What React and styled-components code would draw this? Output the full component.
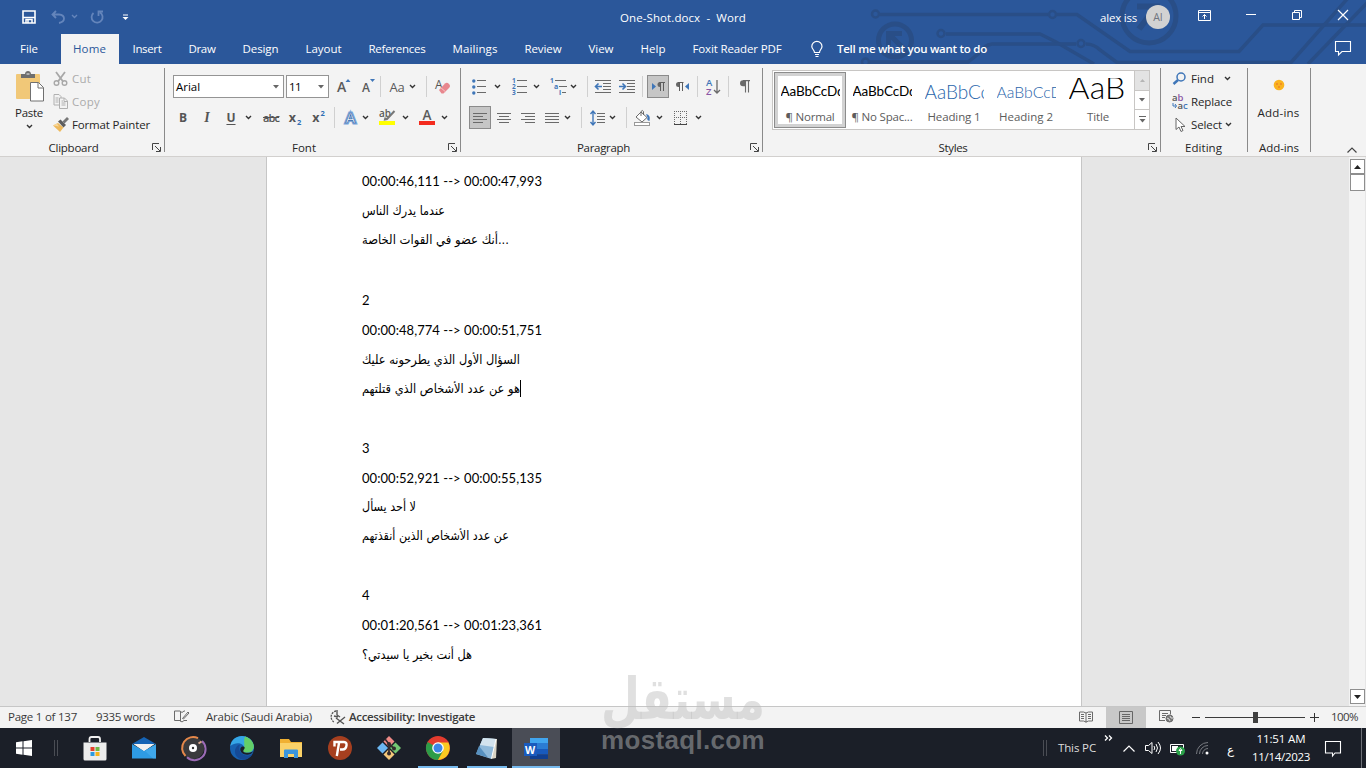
import React, { useLayoutEffect, useRef } from 'react';
import styled, { createGlobalStyle } from 'styled-components';

const Global = createGlobalStyle`
  * { box-sizing: border-box; }
  html, body { margin: 0; padding: 0; overflow: hidden; }
  body { font-family: "Open Sans", "Noto Sans", sans-serif; font-size: 11.5px; color: #262626; }
  svg { display: block; flex: none; overflow: visible; }
`;

/* ---------- text that fills a known measure ---------- */
const Measure = styled.span`
  display: inline-block;
  flex: none;
  width: ${p => p.$w}px;
  white-space: nowrap;
  line-height: 16px;
  font-size: ${p => p.$size || 11.5}px;
  font-weight: ${p => p.$weight || 400};
  font-family: ${p => p.$font || 'inherit'};
  color: ${p => p.$color || 'inherit'};
`;
const Run = styled.span`
  display: inline-block;
  white-space: pre;
  transform-origin: 0 50%;
  text-decoration: ${p => p.$deco || 'none'};
`;
function Text({ w, size, weight, font, color, deco, squeeze, children }) {
  const ref = useRef(null);
  useLayoutEffect(() => {
    const el = ref.current;
    el.style.letterSpacing = '';
    el.style.transform = '';
    const natural = el.getBoundingClientRect().width;
    if (squeeze) el.style.transform = `scaleX(${w / natural})`;
    else el.style.letterSpacing = `${(w - natural) / el.textContent.length}px`;
  }, [w, squeeze]);
  return (
    <Measure $w={w} $size={size} $weight={weight} $font={font} $color={color}>
      <Run ref={ref} $deco={deco}>{children}</Run>
    </Measure>
  );
}

function Ico({ w, h, children, ...rest }) {
  return <svg width={w} height={h} viewBox={`0 0 ${w} ${h}`} fill="none" {...rest}>{children}</svg>;
}
const Chevron = ({ color = '#333' }) => (
  <Ico w={7} h={5}><path d="M1 1l2.500 2.500L6 1" stroke={color} strokeWidth="1.400" /></Ico>
);

/* ---------- window frame ---------- */
const Window = styled.div`
  width: 1366px; height: 768px;
  display: flex; flex-direction: column;
  position: relative; overflow: hidden;
  background: #e6e6e6;
`;
const Header = styled.header`
  height: 64px; background: #2b579a; color: #fff; position: relative; overflow: hidden;
  display: flex; flex-direction: column;
`;
const Circuit = styled.svg` position: absolute; right: 0; top: 0; `;
const TitleBar = styled.div`
  height: 34px; display: flex; align-items: center; position: relative;
`;
const Piece = styled.div`
  display: flex; align-items: center; justify-content: center; flex: none;
  margin-left: ${p => p.$gap || 0}px;
  margin-top: ${p => p.$drop || 0}px;
  width: ${p => (p.$w ? `${p.$w}px` : 'auto')};
`;
const Avatar = styled.div`
  width: 24px; height: 24px; border-radius: 50%; background: #d2d2d2; color: #6f7580;
  display: flex; align-items: center; justify-content: center; font-size: 10.5px; flex: none;
  margin-left: 9px;
`;
const TabBar = styled.nav` height: 30px; display: flex; align-items: stretch; position: relative; padding-left: 20px; `;
const Tab = styled.div`
  display: flex; align-items: center; padding: 0 ${p => p.$right ?? 13.5}px 0 ${p => p.$left ?? 13.5}px;
  background: ${p => (p.$active ? '#f3f3f3' : 'transparent')};
  color: ${p => (p.$active ? '#2b579a' : '#fff')};
`;

/* ---------- ribbon ---------- */
const Ribbon = styled.section`
  height: 93px; background: #f3f3f3; border-bottom: 1px solid #d2d0ce;
  display: flex; align-items: stretch; flex: none;
`;
const Group = styled.div`
  width: ${p => p.$w}px; display: flex; flex-direction: column; flex: none;
  position: relative;
  &::after {
    content: ''; position: absolute; right: 0; top: 4px; bottom: 4px; width: 1px; background: #8a8a8a;
  }
`;
const GroupBody = styled.div` height: 75px; display: flex; flex-direction: ${p => (p.$row ? 'row' : 'column')}; padding: ${p => p.$pad || 0}; `;
const GroupLabel = styled.div`
  height: 17px; display: flex; align-items: center; justify-content: center; position: relative;
  padding-right: ${p => p.$shift || 0}px;
`;
const Launcher = styled.span` position: absolute; right: 4px; top: 4px; `;
const ToolRow = styled.div` height: 23px; display: flex; align-items: center; margin-bottom: ${p => p.$mb || 0}px; `;
const Divider = styled.i` width: 1px; height: 21px; background: #d0d0d0; flex: none; margin-left: ${p => p.$gap}px; `;
const Combo = styled.div`
  width: ${p => p.$w}px; height: 23px; border: 1px solid #949494; background: #fff; flex: none;
  display: flex; align-items: center; justify-content: space-between; padding: 0 4px 0 2px; color: #000;
  margin-right: 2px;
`;
const Pressed = styled.div`
  width: 22px; height: 23px; border: 1px solid #8b8b8b; background: #c6c6c6; flex: none;
  display: flex; align-items: center; justify-content: center; margin-left: ${p => p.$gap || 0}px;
`;
const Glyph = styled.span`
  font-size: ${p => p.$size || 13}px; font-weight: ${p => p.$weight || 400}; color: #555;
  font-style: ${p => (p.$italic ? 'italic' : 'normal')};
  font-family: ${p => p.$font || 'inherit'};
  text-decoration: ${p => p.$deco || 'none'}; text-underline-offset: 2px;
  line-height: 16px; white-space: nowrap;
  sup, sub { font-size: 7.5px; line-height: 0; color: #2f6eb5; margin-left: 1px; }
`;
const PasteButton = styled.div`
  width: 38px; display: flex; flex-direction: column; align-items: center; gap: 3px; margin-left: 10px; padding-top: 7px;
`;
const CommandList = styled.div` display: flex; flex-direction: column; padding-top: 3px; margin-left: ${p => p.$gap}px; `;
const Command = styled.div`
  height: 23px; display: flex; align-items: center; color: ${p => (p.$off ? '#ababab' : '#262626')};
`;
const CommandIcon = styled.span` width: ${p => p.$w}px; display: flex; align-items: center; flex: none; `;

/* ---------- style gallery ---------- */
const Gallery = styled.div`
  width: 378px; height: 60px; border: 1px solid #c8c6c4; background: #fff; display: flex; margin-left: 9px;
`;
const StyleCell = styled.div`
  width: 72px; height: 56px; margin: 1px 0 0 ${p => (p.$on ? 1 : 0)}px; flex: none;
  display: flex; flex-direction: column; align-items: center; justify-content: space-between;
  padding: 6px 0 3px; color: #5c5c5c;
  box-shadow: ${p => (p.$on ? 'inset 0 0 0 1px #8c8c8c, inset 0 0 0 4px #d2d2d2' : 'none')};
`;
const Sample = styled.div`
  width: 59px; height: 27px; overflow: hidden; display: flex;
  align-items: ${p => (p.$tall ? 'flex-start' : 'center')};
  span { line-height: ${p => (p.$tall ? '18px' : '27px')}; }
`;
const GalleryScroll = styled.div` width: 15px; margin-left: auto; display: flex; flex-direction: column; border-left: 1px solid #c8c6c4; `;
const ScrollStep = styled.div`
  flex: 1; display: flex; align-items: center; justify-content: center;
  background: ${p => (p.$off ? '#e3e3e3' : '#fff')};
  & + & { border-top: 1px solid #c8c6c4; }
`;
const AddIn = styled.div` width: 100%; display: flex; flex-direction: column; align-items: center; padding: 15px 2px 0 0; gap: 14px; `;
const Collapse = styled.div` margin-left: auto; display: flex; align-items: flex-end; padding: 0 9px 3px 0; `;

/* ---------- document ---------- */
const Workspace = styled.main` height: 549px; display: flex; flex: none; background: #e6e6e6; `;
const Sheet = styled.article`
  width: 816px; margin-left: 266px; background: #fff; border: solid #c6c6c6; border-width: 0 1px;
  padding: 9px 0 0 95px; color: #000; display: flex; flex-direction: column;
`;
const Line = styled.p`
  margin: 0; height: ${p => p.$h}px; display: flex; align-items: center; flex: none;
`;
const Caret = styled.i` width: 1px; height: 17px; background: #000; `;
const ScrollBar = styled.aside`
  width: 16px; margin-left: auto; margin-right: 1px; background: #f3f3f3; padding: 2px 0 2px 1px; display: flex; flex-direction: column;
`;
const ScrollBox = styled.div`
  width: 15px; height: ${p => p.$h}px; border: 1px solid #8e8e8e; background: #fff;
  display: flex; align-items: center; justify-content: center; margin-top: ${p => p.$mt || 0};
`;

/* ---------- status bar ---------- */
const Status = styled.footer`
  height: 22px; border-top: 1px solid #c6c6c6; background: #f3f3f3; display: flex; align-items: center; flex: none; color: #3b3b3b;
`;
const ViewOn = styled.div` width: 40px; height: 21px; background: #c8c8c8; display: flex; align-items: center; justify-content: center; margin-left: 13px; padding-bottom: 1px; `;
const Slider = styled.div`
  width: 100px; height: 11px; margin: 0 5px 0 5px; display: flex; align-items: center; justify-content: center;
  background: linear-gradient(#3b3b3b, #3b3b3b) 0 5px / 100% 1px no-repeat;
  &::after { content: ''; width: 5px; height: 11px; background: #3f3f3f; }
`;

/* ---------- taskbar ---------- */
const TaskBar = styled.footer` height: 40px; background: #1b1f28; display: flex; align-items: stretch; flex: none; color: #fff; `;
const AppButton = styled.div`
  width: ${p => p.$w || 49}px; display: flex; align-items: center; justify-content: center; flex: none;
  background: ${p => (p.$on ? '#4a4d56' : 'transparent')};
`;
const Running = styled(AppButton)`
  border-bottom: 2px solid #76b9ed; padding-top: 2px; margin-left: ${p => p.$gap || 0}px;
`;
const Grip = styled.i` width: 4px; height: 16px; border: solid #4a4d54; border-width: 0 1px; align-self: center; margin-left: ${p => p.$gap}px; `;
const Clock = styled.div` display: flex; flex-direction: column; align-items: center; justify-content: center; gap: 2px; margin-left: 18px; width: 58px; padding-bottom: 1px; `;
const ShowDesktop = styled.i` width: 1px; background: #6d7077; margin-left: 20px; `;

const Brand = styled.div`
  position: absolute; left: 601px; top: 672px; width: 165px; height: 82px;
  color: rgba(189, 189, 189, .47);
  display: flex; flex-direction: column;
`;
const BrandArabic = styled.div`
  height: 54px;
  span { line-height: 55px; }
`;
const BrandLatin = styled.div` height: 28px; span { line-height: 28px; } `;

/* ---------- icons ---------- */
const G = '#6a6a6a';
const B = '#3f76b8';

const LauncherIcon = () => (
  <Ico w={9} h={9}><path d="M.5 7V.5H7M3 3l5 5M8.500 4v4.500H4" stroke="#444" /></Ico>
);
const AlignIcon = ({ rows }) => (
  <Ico w={15} h={10}>{rows.map(([x1, x2, y]) => <path key={y} d={`M${x1} ${y}.5H${x2}`} stroke={G} />)}</Ico>
);

const PasteIcon = () => (
  <Ico w={30} h={31}>
    <rect x="2" y="3" width="24" height="25" rx="1" fill="#f1c878" />
    <path d="M7 3h4c0-4 6-4 6 0h4v4H7z" fill="#6e6e6e" /><path d="M12.500 3h3" stroke="#f1f1f1" />
    <path d="M16.500 11.500h8l5 5V30h-13z" fill="#fff" stroke="#707070" /><path d="M24 11.500v5.500h5.500" stroke="#707070" />
  </Ico>
);
const CutIcon = () => (
  <Ico w={16} h={16} stroke="#a8a8a8"><path d="M3 1l7 9.500M12 1L5 10.500" strokeWidth="1.800" /><circle cx="3.500" cy="12" r="2.300" strokeWidth="1.400" /><circle cx="11.500" cy="12" r="2.300" strokeWidth="1.400" /></Ico>
);
const CopyIcon = () => (
  <Ico w={16} h={15} stroke="#b0b0b0"><path d="M1 .5h5l2 2V11H1zM2.500 4h3M2.500 6h3M2.500 8h3" /><path d="M6.500 4h5l3 3v7.500h-8z" fill="#f3f3f3" /><path d="M11 4v3.500h3.500M8.500 9h4M8.500 11h4M8.500 7h1.500" /></Ico>
);
const BrushIcon = () => (
  <Ico w={16} h={15}><path d="M0 8.500l5-2.500 5.500 4.500L7 15z" fill="#eeb95c" /><path d="M0 8.500l4-2 2 3z" fill="#f7d79c" /><path d="M5 4.500l2.500-2L13 8l-2.500 2.500z" fill="#5e5e5e" /><path d="M10.500 5.500L15 1" stroke="#777" strokeWidth="2.800" /></Ico>
);
const EraserIcon = () => (
  <Ico w={16} h={17}><text x="0" y="11" fontSize="12" fill="#555">A</text><path d="M4 12l6-6.500q2-1.500 4 .500t0 4L8.500 15.500H6.500z" fill="#e8878e" /><path d="M6 9.800l4.500 4" stroke="#f6c4c6" /></Ico>
);
const BulletsIcon = () => (
  <Ico w={14} h={14}>{[1, 7, 13].map(y => <g key={y}><circle cx="1.800" cy={y} r="1.700" fill={B} /><path d={`M5 ${y - .5}h9`} stroke={G} /></g>)}</Ico>
);
const NumbersIcon = () => (
  <Ico w={15} h={17}>{[1, 2, 3].map(n => <g key={n}><text x="0" y={n * 6 - 1} fontSize="6.500" fontWeight="700" fill={B}>{n}</text><path d={`M5 ${n * 6 - 3.5}h10`} stroke={G} /></g>)}</Ico>
);
const MultiIcon = () => (
  <Ico w={17} h={17}><text x="0" y="5" fontSize="6.500" fontWeight="700" fill={B}>1</text><text x="4" y="11" fontSize="7" fontWeight="700" fill={B}>a</text><text x="9" y="16.500" fontSize="7" fontWeight="700" fill={B}>i</text><path d="M5 2.500h11M9 8.500h8M12 14.500h4" stroke={G} /></Ico>
);
const IndentIcon = ({ out }) => (
  <Ico w={16} h={13}><path d="M0 .5h16M8 3.500h8M8 6.500h8M8 9.500h8M0 12.500h16" stroke={G} /><path d={out ? 'M7 6.500H1M3.500 3.500l-3 3 3 3' : 'M0 6.500h6M3.500 3.500l3 3-3 3'} stroke={B} strokeWidth="1.600" /></Ico>
);
const LtrIcon = () => <Ico w={13} h={9}><path d="M0 1l4 3.500L0 8z" fill={B} /><path d="M8.500 0v5h-.5a2.500 2.500 0 010-5z" fill="#666" /><path d="M13 .5H7.500M8.500 0v9M11.500 0v9" stroke="#5d5d5d" /></Ico>;
const RtlIcon = () => <Ico w={13} h={9}><path d="M13 1L9 4.500 13 8z" fill={B} /><path d="M3 0v5h-.500a2.500 2.500 0 010-5z" fill="#666" /><path d="M7.500 .5H2M3.500 0v9M6.500 0v9" stroke="#5d5d5d" /></Ico>;
const SortIcon = () => (
  <Ico w={15} h={17}><text x="0" y="7.500" fontSize="9.500" fontWeight="600" fill={B}>A</text><text x="0" y="17" fontSize="9.500" fontWeight="600" fill="#8b57a5">Z</text><path d="M11 2v13M8 12l3 3 3-3" stroke={G} strokeWidth="1.300" /></Ico>
);
const PilcrowIcon = () => (
  <Ico w={11} h={13}><path d="M11 .6H4M6.500 .5v12M9.500 .5v12" stroke={G} strokeWidth="1.100" /><path d="M6.500 .3H4a3 3 0 000 6h2.500z" fill={G} /></Ico>
);
const SpacingIcon = () => (
  <Ico w={15} h={16}><path d="M3 1v14M.500 4L3 1l2.500 3M.500 12L3 15l2.500-3" stroke={B} strokeWidth="1.400" /><path d="M7 3.500h8M7 6.500h8M7 9.500h8M7 12.500h8" stroke={G} /></Ico>
);
const BucketIcon = () => (
  <Ico w={17} h={16}><path d="M2 7l5-5 6 5.500-5 4.500z" fill="#fff" stroke={G} /><path d="M7 6V1.500q1.500-2 2.500 0V5" stroke={G} /><path d="M12 4q5 1 3.500 7-3-.500-2-3.500z" fill={B} /><rect x=".5" y="12.500" width="15" height="3" fill="#fff" stroke="#999" /></Ico>
);
const BordersIcon = () => (
  <Ico w={14} h={14}><path d="M.5 0v13M6.500 0v13M12.500 0v13M0 .5h13M0 6.500h13" stroke={G} strokeDasharray="1 1" /><path d="M0 13.500h13" stroke="#444" /></Ico>
);

const BookIcon = () => (
  <Ico w={14} h={12} stroke={G}><path d="M.5 1h4L7 2l2.500-1h4v9h-4L7 11l-2.500-1h-4zM7 2v9.500M2 3.500h3M2 5.500h3M2 7.500h3M9 3.500h3M9 5.500h3M9 7.500h3" /></Ico>
);
const PageIcon = () => <Ico w={14} h={13} stroke="#666"><path d="M.5 .5h13v12H.5zM3 3.500h8M3 5.500h8M3 7.500h8M3 9.500h8" /></Ico>;
const WebIcon = () => <Ico w={15} h={13} stroke={G}><path d="M.5 10.500V.5h11v4M3 3.500h6M3 5.500h4M3 7.500h3M0 10.500h6" /><circle cx="10.500" cy="8.500" r="3.500" fill="#777" /><path d="M8 8l2 1 1 2M11 6l1 2h2" stroke="#ddd" /></Ico>;

const documentLines = [
  { t: '00:00:46,111 --> 00:00:47,993', h: 30, w: 180 },
  { a: 'عندما يدرك الناس', w: 83 },
  { a: 'أنك عضو في القوات الخاصة...', w: 147 },
  { gap: 31 },
  { t: '2', h: 30, w: 7 },
  { t: '00:00:48,774 --> 00:00:51,751', h: 30, w: 180 },
  { a: 'السؤال الأول الذي يطرحونه عليك', w: 158 },
  { a: 'هو عن عدد الأشخاص الذي قتلتهم', w: 158, caret: true },
  { gap: 30 },
  { t: '3', h: 30, w: 7 },
  { t: '00:00:52,921 --> 00:00:55,135', h: 29, w: 180 },
  { a: 'لا أحد يسأل', w: 54 },
  { a: 'عن عدد الأشخاص الذين أنقذتهم', w: 147 },
  { gap: 30 },
  { t: '4', h: 30, w: 7 },
  { t: '00:01:20,561 --> 00:01:23,361', h: 30, w: 180 },
  { a: 'هل أنت بخير يا سيدتي؟', w: 110 },
];
const tabs = [['Insert', 29], ['Draw', 27], ['Design', 36], ['Layout', 36], ['References', 57], ['Mailings', 45], ['Review', 37], ['View', 25], ['Help', 25], ['Foxit Reader PDF', 89]];
const calibri = 'Lato, "Open Sans", sans-serif';

function AppHeader() {
  return (
    <Header>
      <Circuit width="510" height="64" viewBox="856 0 510 64" fill="none" stroke="#294e87" strokeWidth="3.500">
        <circle cx="875.500" cy="14" r="3.500" strokeWidth="2.500" /><path d="M880 14.500h168M1057 14.500h20L1130 51.500h109l24-26.500h103" />
        <circle cx="1052.500" cy="14.500" r="3.500" strokeWidth="2.500" /><circle cx="941" cy="33.500" r="3.500" strokeWidth="2.500" />
        <path d="M946 34h94l16 8 38 22" /><circle cx="1081" cy="43.500" r="3.500" strokeWidth="2.500" />
        <path d="M1076 44h-84q-8 1-14 10l-10 8h-98M1086 44q8 0 14 6l17 12.500h174L1348-2M1308 64l60-62" />
        <circle cx="865.500" cy="62" r="3.500" strokeWidth="2.500" />
        <circle cx="895" cy="40.500" r="16.500" strokeWidth="5" /><path d="M888.500 46V33.500H902M889 34l14 14" strokeWidth="5" />
        <circle cx="1149" cy="16" r="27" strokeWidth="5" /><path d="M1137 6.500h20v18M1156 7l-17 22" strokeWidth="6" />
      </Circuit>
      <TitleBar>
        <Piece $gap={22} $w={14}><Ico w={14} h={14}><path d="M1 1h12v12H1z" stroke="#fff" strokeWidth="1.600" /><path d="M1 7.500h12" stroke="#fff" strokeWidth="1.500" /><path d="M4 13v-3.500h6V13" stroke="#fff" strokeWidth="1.500" /><path d="M6 10v3" stroke="#fff" strokeWidth="1.500" /></Ico></Piece>
        <Piece $gap={15} $w={14} $drop={-1}><Ico w={14} h={14} stroke="#6485bb"><path d="M5 1L1.500 4.500 5 8M2 4.500h6q5 .5 5 4t-5 4.500" strokeWidth="1.800" /></Ico></Piece>
        <Piece $gap={6} $w={7} $drop={-1}><Chevron color="#6485bb" /></Piece>
        <Piece $gap={12} $w={14} $drop={-1}><Ico w={14} h={14} stroke="#6485bb"><path d="M3.500 3A5.500 5.500 0 1010 2.500M8.500 6V1.500H13" strokeWidth="1.800" /></Ico></Piece>
        <Piece $gap={18} $w={7}><Ico w={7} h={7}><path d="M1 1h5" stroke="#fff" /><path d="M0.500 3h6l-3 3z" fill="#fff" /></Ico></Piece>
        <Piece $gap={491} $drop={2}><Text w={126}>{'One-Shot.docx  -  Word'}</Text></Piece>
        <Piece $gap={354} $drop={2}><Text w={37}>alex iss</Text></Piece>
        <Avatar>AI</Avatar>
        <Piece $gap={28} $w={13} $drop={-4}><Ico w={13} h={11} stroke="#fff"><path d="M.5 .5h12v10H.5zM.5 2.500h12M6.500 9V4.500M4.500 6.500l2-2 2 2" /></Ico></Piece>
        <Piece $gap={35} $w={10} $drop={-5}><Ico w={10} h={1}><path d="M0 .5h10" stroke="#fff" /></Ico></Piece>
        <Piece $gap={36} $w={10} $drop={-4}><Ico w={10} h={10} stroke="#fff"><path d="M.5 2.500h7v7h-7zM2.500 2V.5h7v7H8" /></Ico></Piece>
        <Piece $gap={35} $w={11} $drop={-4}><Ico w={10} h={10} stroke="#fff"><path d="M0 0l10 10M10 0L0 10" strokeWidth="1.200" /></Ico></Piece>
      </TitleBar>
      <TabBar>
        <Tab $left={0} $right={23}><Text w={18}>File</Text></Tab>
        <Tab $active $left={12} $right={13}><Text w={33}>Home</Text></Tab>
        {tabs.map(([name, w]) => <Tab key={name}><Text w={w}>{name}</Text></Tab>)}
        <Piece $gap={16} $w={12}><Ico w={12} h={17} stroke="#fff"><path d="M3.500 11.500C3.500 9 .8 8 .8 5.500a5.100 5.100 0 0110.200 0C11 8 8.500 9 8.500 11.500zM4 13.500h4M4.500 15.500h3" strokeWidth="1.200" /></Ico></Piece>
        <Piece $gap={14}><Text w={150} weight={600}>Tell me what you want to do</Text></Piece>
        <Piece $gap={348} $w={16} $drop={-1}><Ico w={16} h={15} stroke="#fff"><path d="M.5 .5h15v10H7l-3.500 3.500v-3.500h-3z" strokeWidth="1.100" /></Ico></Piece>
      </TabBar>
    </Header>
  );
}

function ClipboardGroup() {
  return (
    <Group $w={165}>
      <GroupBody $row>
        <PasteButton><PasteIcon /><Text w={28}>Paste</Text><Chevron /></PasteButton>
        <CommandList $gap={5}>
          <Command $off><CommandIcon $w={19}><CutIcon /></CommandIcon><Text w={19}>Cut</Text></Command>
          <Command $off><CommandIcon $w={19}><CopyIcon /></CommandIcon><Text w={28}>Copy</Text></Command>
          <Command><CommandIcon $w={19}><BrushIcon /></CommandIcon><Text w={78}>Format Painter</Text></Command>
        </CommandList>
      </GroupBody>
      <GroupLabel $shift={18}><Text w={50}>Clipboard</Text><Launcher><LauncherIcon /></Launcher></GroupLabel>
    </Group>
  );
}

function FontGroup() {
  const down = <Ico w={6} h={4}><path d="M0 0h6L3 3.500z" fill="#666" /></Ico>;
  return (
    <Group $w={296}>
      <GroupBody $pad="11px 0 0 8px">
        <ToolRow $mb={8}>
          <Combo $w={111}><Text w={24}>Arial</Text>{down}</Combo>
          <Combo $w={43}><Text w={12}>11</Text>{down}</Combo>
          <Piece $w={26}><Ico w={14} h={15}><text x="0" y="13" fontSize="14" fontWeight="600" fill="#5a5a5a">A</text><path d="M8.500 3h5L11 0z" fill={B} /></Ico></Piece>
          <Piece $w={22}><Ico w={13} h={15}><text x="0" y="13" fontSize="12" fontWeight="600" fill="#5a5a5a">A</text><path d="M8 0h5l-2.500 3z" fill={B} /></Ico></Piece>
          <Divider $gap={1} />
          <Piece $gap={6} $w={20}><Text w={15} size={13} color="#5a5a5a">Aa</Text></Piece>
          <Piece $w={11}><Chevron /></Piece>
          <Divider $gap={8} />
          <Piece $w={31}><EraserIcon /></Piece>
        </ToolRow>
        <ToolRow>
          <Piece $w={20}><Glyph $weight={700} $size={12}>B</Glyph></Piece>
          <Piece $gap={4} $w={20}><Glyph $italic $weight={700} $font='"Liberation Serif"' $size={14}>I</Glyph></Piece>
          <Piece $gap={4} $w={20}><Glyph $weight={700} $deco="underline" $size={12}>U</Glyph></Piece>
          <Piece $gap={2} $w={11}><Chevron /></Piece>
          <Piece $gap={1} $w={32}><Text w={16} size={11} color="#555" weight={600} deco="line-through">abc</Text></Piece>
          <Piece $w={16}><Glyph $weight={700} $size={12.5}>x<sub>2</sub></Glyph></Piece>
          <Piece $w={31}><Glyph $weight={700} $size={12.5}>x<sup>2</sup></Glyph></Piece>
          <Divider $gap={0} />
          <Piece $gap={5} $w={20}><Ico w={13} h={15}><text x="1.500" y="13" fontSize="15" fontWeight="600" fill="#fff" stroke="#7aa5da" strokeWidth="3" paintOrder="stroke">A</text><text x="1.500" y="13" fontSize="15" fontWeight="600" fill="#fff" stroke="#3268ab" strokeWidth=".7">A</text></Ico></Piece>
          <Piece $w={10}><Chevron /></Piece>
          <Piece $gap={4} $w={26}><Ico w={17} h={17}><text x="0" y="8" fontSize="10" fontWeight="600" fill="#5a5a5a">ab</text><path d="M15.500 2L8 10l-2 .5.500-2" stroke="#777" strokeWidth="2" /><rect x="0" y="12" width="16" height="4" fill="#ffff00" /></Ico></Piece>
          <Piece $w={10}><Chevron /></Piece>
          <Piece $gap={4} $w={26}><Ico w={16} h={17}><text x="3.500" y="11" fontSize="13.500" fontWeight="600" fill="#5a5a5a">A</text><rect x="0" y="12" width="16" height="4" fill="#f32b1e" /></Ico></Piece>
          <Piece $w={9}><Chevron /></Piece>
        </ToolRow>
      </GroupBody>
      <GroupLabel $shift={18}><Text w={24}>Font</Text><Launcher><LauncherIcon /></Launcher></GroupLabel>
    </Group>
  );
}

function ParagraphGroup() {
  return (
    <Group $w={302}>
      <GroupBody $pad="11px 0 0 8px">
        <ToolRow $mb={8}>
          <Piece $w={20}><BulletsIcon /></Piece><Piece $gap={3} $w={11}><Chevron /></Piece>
          <Piece $gap={6} $w={20}><NumbersIcon /></Piece><Piece $gap={2} $w={11}><Chevron /></Piece>
          <Piece $gap={6} $w={20}><MultiIcon /></Piece><Piece $gap={0} $w={10}><Chevron /></Piece>
          <Divider $gap={9} />
          <Piece $gap={7} $w={16}><IndentIcon out /></Piece>
          <Piece $gap={8} $w={16}><IndentIcon /></Piece>
          <Divider $gap={7} />
          <Pressed $gap={4}><LtrIcon /></Pressed>
          <Piece $gap={7} $w={13}><RtlIcon /></Piece>
          <Divider $gap={8} />
          <Piece $gap={8} $w={15}><SortIcon /></Piece>
          <Divider $gap={7} />
          <Piece $gap={9} $w={12}><PilcrowIcon /></Piece>
        </ToolRow>
        <ToolRow>
          <Pressed><AlignIcon rows={[[0, 14, 0], [0, 10, 3], [0, 14, 6], [0, 10, 9]]} /></Pressed>
          <Piece $gap={6} $w={15}><AlignIcon rows={[[0, 14, 0], [2, 12, 3], [0, 14, 6], [2, 12, 9]]} /></Piece>
          <Piece $gap={9} $w={15}><AlignIcon rows={[[0, 14, 0], [4, 14, 3], [0, 14, 6], [4, 14, 9]]} /></Piece>
          <Piece $gap={9} $w={15}><AlignIcon rows={[[0, 14, 0], [0, 14, 3], [0, 14, 6], [0, 14, 9]]} /></Piece>
          <Piece $gap={2} $w={11}><Chevron /></Piece>
          <Divider $gap={8} />
          <Piece $gap={8} $w={15}><SpacingIcon /></Piece>
          <Piece $gap={2} $w={11}><Chevron /></Piece>
          <Divider $gap={8} />
          <Piece $gap={7} $w={17}><BucketIcon /></Piece>
          <Piece $gap={3} $w={11}><Chevron /></Piece>
          <Piece $gap={9} $w={14}><BordersIcon /></Piece>
          <Piece $gap={5} $w={11}><Chevron /></Piece>
        </ToolRow>
      </GroupBody>
      <GroupLabel $shift={17}><Text w={53}>Paragraph</Text><Launcher><LauncherIcon /></Launcher></GroupLabel>
    </Group>
  );
}

function StylesGroup() {
  return (
    <Group $w={398}>
      <GroupBody $row $pad="6px 0 0 0">
        <Gallery>
          <StyleCell $on><Sample><Text w={64} size={13.5} font={calibri} color="#000">AaBbCcDd</Text></Sample><Text w={49}>¶ Normal</Text></StyleCell>
          <StyleCell><Sample><Text w={64} size={13.5} font={calibri} color="#000">AaBbCcDd</Text></Sample><Text w={61}>¶ No Spac...</Text></StyleCell>
          <StyleCell><Sample><Text w={65} size={19} weight={300} font={calibri} color="#2a66ab">AaBbCc</Text></Sample><Text w={53}>Heading 1</Text></StyleCell>
          <StyleCell><Sample><Text w={66} size={15.8} weight={300} font={calibri} color="#2a66ab">AaBbCcD</Text></Sample><Text w={54}>Heading 2</Text></StyleCell>
          <StyleCell><Sample $tall><Text w={57} size={32} weight={300} font={calibri} color="#000">AaB</Text></Sample><Text w={22}>Title</Text></StyleCell>
          <GalleryScroll>
            <ScrollStep $off><Ico w={5} h={3}><path d="M0 3h5L2.500 0z" fill="#b5b5b5" /></Ico></ScrollStep>
            <ScrollStep><Ico w={6} h={4}><path d="M0 0h6L3 3.500z" fill="#666" /></Ico></ScrollStep>
            <ScrollStep><Ico w={7} h={7}><path d="M0 .5h7" stroke="#666" /><path d="M.5 3h6l-3 3.500z" fill="#666" /></Ico></ScrollStep>
          </GalleryScroll>
        </Gallery>
      </GroupBody>
      <GroupLabel $shift={18}><Text w={29}>Styles</Text><Launcher><LauncherIcon /></Launcher></GroupLabel>
    </Group>
  );
}

function EditingGroup() {
  return (
    <Group $w={87}>
      <GroupBody $row>
        <CommandList $gap={11}>
          <Command><CommandIcon $w={19}><Ico w={14} h={14} stroke={B}><circle cx="9" cy="5" r="4" strokeWidth="1.500" /><path d="M6 8L1.500 12" strokeWidth="2.500" /></Ico></CommandIcon><Text w={23}>Find</Text><Piece $gap={10}><Chevron /></Piece></Command>
          <Command><CommandIcon $w={19}><Ico w={17} h={16}><text x="0" y="6.500" fontSize="9.500" fontWeight="600" fill="#555">a<tspan fill="#8b57a5">b</tspan></text><text x="5.500" y="15" fontSize="9.500" fontWeight="600" fill="#555">a<tspan fill={B}>c</tspan></text><path d="M1 9v3h3M3 10l1.500 2L3 14" stroke={B} /></Ico></CommandIcon><Text w={41}>Replace</Text></Command>
          <Command><CommandIcon $w={19}><Piece $gap={3}><Ico w={11} h={15} stroke="#666"><path d="M1 1v11.500l3-2.500 2 4.500 2-1-2-4h4z" fill="#fff" /></Ico></Piece></CommandIcon><Text w={31}>Select</Text><Piece $gap={3}><Chevron /></Piece></Command>
        </CommandList>
      </GroupBody>
      <GroupLabel $shift={2}><Text w={37}>Editing</Text></GroupLabel>
    </Group>
  );
}

function SystemTaskbar() {
  return (
    <TaskBar>
      <AppButton $w={48}><Ico w={16} h={16}><path d="M0 2.200l6.500-.9v6.200H0zM7.500 1.200L16 0v7.500H7.500zM0 8.500h6.500v6.200L0 13.800zM7.500 8.500H16V16l-8.500-1.200z" fill="#fff" /></Ico></AppButton>
      <Grip $gap={6} />
      <Piece $gap={25} $w={23}><Ico w={24} h={25}><path d="M6.500 6V3q0-2 2-2h6.500q2 0 2 2v3" stroke="#f0f0f0" strokeWidth="1.800" /><path d="M.5 6.500h23V23q0 1.500-1.500 1.500H2Q.5 24.500.5 23z" fill="#ececec" /><path d="M7.500 11h4v4h-4z" fill="#e5402b" /><path d="M12.500 11h4v4h-4z" fill="#6fb844" /><path d="M7.500 16h4v4h-4z" fill="#2c9ae0" /><path d="M12.500 16h4v4h-4z" fill="#f6b31c" /></Ico></Piece>
      <Piece $gap={26} $w={24}><Ico w={24} h={24}><path d="M0 8l12-7 12 7z" fill="#1664b5" /><path d="M1.500 8h21L12 15.500z" fill="#f2f2f2" /><path d="M0 8l12 7 12-7v14.500H0z" fill="#2e9be4" /><path d="M2 8h20L12 14.500z" fill="#f2f2f2" /><path d="M13 15L24 8.500v14h-3z" fill="#4fb4ef" opacity=".5" /></Ico></Piece>
      <Piece $gap={25} $w={24}><Ico w={24} h={24}><circle cx="12" cy="12" r="11" fill="#3a3a3c" /><path d="M4.500 20A11 11 0 0117 2.200" stroke="#e5884a" strokeWidth="2" /><path d="M21 5A11 11 0 016 21.300" stroke="#9b6bb5" strokeWidth="2" /><path d="M17.500 7.500l3-2" stroke="#d9a58c" strokeWidth="2" /><circle cx="12" cy="12" r="4" fill="#fff" /><circle cx="12" cy="12" r="1.200" fill="#333" /></Ico></Piece>
      <Piece $gap={25} $w={24}>
        <Ico w={24} h={24}>
          <circle cx="12" cy="12" r="12" fill="#1761b0" />
          <path d="M.3 10C2-2.500 20-4 23.600 9c1.200 5-2.600 8-7.100 8-3 0-4.500-1.500-3-3.500C16 8 7 4.500.3 10z" fill="#35a6e6" />
          <path d="M15 .5c7.500 2 9.500 8.500 8.700 11.500-1 3.500-4.200 5-7.700 4.800-3-.3-3.500-1.800-2.500-3.500C15.500 9 13 5 15 .5z" fill="#63cf68" />
          <path d="M10 8.500c-3.500 9 6 13.500 12.500 9.500C18 26 8 25 5.500 18.500 4 14 6 9.500 10 8.500z" fill="#154a96" />
          <path d="M12.500 10.500c2.500 0 3 1.500 1 3.500-.8 1.800.5 2.700 3 2.800 3 .1 5-.3 6.500-1.300-2 4-8 4-11 1.500-2.500-2.500-2-6 .5-6.500z" fill="#1b1f28" />
        </Ico>
      </Piece>
      <Piece $gap={26} $w={22}><Ico w={22} h={19}><path d="M0 0h9l2 3h11v15H0z" fill="#f0b032" /><path d="M0 4h22v14H0z" fill="#fad168" /><path d="M4 19v-7.500q0-1 1-1h12q1 0 1 1V19h-4v-4H8v4z" fill="#3b95dc" /></Ico></Piece>
      <Piece $gap={26} $w={24}><Ico w={24} h={24}><circle cx="12" cy="12" r="12" fill="#a63f1f" /><path d="M11 7L8.800 20M6.500 10.500V6h9.500q3 .2 2.500 3.500-.6 4-4 4H12" stroke="#fff" strokeWidth="2.400" /></Ico></Piece>
      <Piece $gap={25} $w={24}><Ico w={24} h={24}><path d="M12 0l5.500 5.500L12 11 6.500 5.500z" fill="#ef8a87" /><path d="M18.500 6.500L24 12l-5.500 5.500L13 12z" fill="#74c873" /><path d="M12 13l5.500 5.500L12 24l-5.500-5.500z" fill="#f4c77a" /><path d="M5.500 6.500L11 12l-5.500 5.500L0 12z" fill="#6cb7f2" /><path d="M8 3l4 5v10M12 8l5 4.500" stroke="#332b2c" strokeWidth="1.700" /><circle cx="12" cy="8" r="2" fill="#332b2c" /><circle cx="12" cy="17.500" r="2" fill="#332b2c" /><circle cx="17" cy="12.500" r="2" fill="#332b2c" /></Ico></Piece>
      <Running $gap={17} $w={40}><Ico w={24} h={24}><circle cx="12" cy="12" r="12" fill="#e33b2e" /><path d="M1.600 6A12 12 0 0012 24l5-9-5-3z" fill="#2c9c48" /><path d="M12 24A12 12 0 0022.400 6.500H12l5 8.500z" fill="#fbc921" /><circle cx="12" cy="12" r="5.800" fill="#fff" /><circle cx="12" cy="12" r="4.500" fill="#3c86e8" /></Ico></Running>
      <Running $gap={9} $w={40}><Ico w={24} h={24}><path d="M8 2l14 1-1 19-5 1z" fill="#d7d2c3" /><path d="M8 2l13 1-4.500 20L1 18z" fill="#8fb9da" /><path d="M8 2l13 1-2 8L5 9z" fill="#d3e3ee" /><path d="M1 18l3-8 9 11.500z" fill="#5790bf" /><path d="M21 3l-4.500 19.500" stroke="#fff" /></Ico></Running>
      <Running $gap={5} $w={48} $on><Ico w={24} h={23}><path d="M6 1h18v5H6z" fill="#41a5ee" /><path d="M6 6h18v6H6z" fill="#2b7cd3" /><path d="M6 12h18v5.500H6z" fill="#185abd" /><path d="M6 17.500h18V22H6z" fill="#103f91" /><rect y="6" width="13" height="13" fill="#1a5bbd" /><text x="1" y="16.500" fontSize="10.500" fontWeight="700" fill="#fff">W</text></Ico></Running>
      <Grip $gap={483} />
      <Piece $gap={11}><Text w={38} color="#ddd">This PC</Text></Piece>
      <Piece $gap={8} $w={9} $drop={-21}><Ico w={9} h={6} stroke="#fff"><path d="M1 .5L3.500 3 1 5.500M5 .5L7.500 3 5 5.500" strokeWidth="1.300" /></Ico></Piece>
      <Piece $gap={10} $w={12}><Ico w={12} h={7}><path d="M.5 6.500L6 1l5.500 5.500" stroke="#fff" strokeWidth="1.200" /></Ico></Piece>
      <Piece $gap={10} $w={17}><Ico w={17} h={14} stroke="#fff"><path d="M.5 4.500h3L7 1.500v11L3.500 9.500h-3zM9 5q1.500 2 0 4M11 3q3 4 0 8M13 1q5 6 0 12" /></Ico></Piece>
      <Piece $gap={8} $w={16} $drop={3}><Ico w={16} h={13}><path d="M.5 1.500h13v8H.5z" stroke="#fff" /><path d="M2 3h6v5H2z" fill="#fff" /><circle cx="10.500" cy="8" r="4.500" fill="#2ba149" /><path d="M10.500 11V7M9 7.500l1.500-2 1.500 2z" stroke="#fff" /></Ico></Piece>
      <Piece $gap={10} $w={13}><Ico w={13} h={13} stroke="#787b81"><path d="M.5 12A11.500 11.500 0 0112 .5M3.500 12A8.500 8.500 0 0112 3.500M6.500 12A5.500 5.500 0 0112 6.500" /><circle cx="11" cy="11" r="1.500" fill="#fff" stroke="none" /></Ico></Piece>
      <Piece $gap={18} $w={7} $drop={3}><Text w={7} size={12} squeeze>ع</Text></Piece>
      <Clock><Text w={49}>11:51 AM</Text><Text w={58}>11/14/2023</Text></Clock>
      <Piece $gap={15} $w={16} $drop={1}><Ico w={16} h={16}><path d="M.5 .5h15v11.500H10l-2.500 3v-3h-7z" stroke="#fff" strokeWidth="1.100" /></Ico></Piece>
      <ShowDesktop />
    </TaskBar>
  );
}

export default function App() {
  return (
    <Window>
      <Global />
      <AppHeader />
      <Ribbon>
        <ClipboardGroup />
        <FontGroup />
        <ParagraphGroup />
        <StylesGroup />
        <EditingGroup />
        <Group $w={63}>
          <GroupBody><AddIn><Ico w={12} h={12}><circle cx="6" cy="6" r="5.300" fill="#fab31f" /><circle cx="4" cy="5" r=".7" fill="#e4572e" /><circle cx="8" cy="5" r=".7" fill="#e4572e" /><circle cx="6" cy="8" r=".7" fill="#e4572e" /></Ico><Text w={42}>Add-ins</Text></AddIn></GroupBody>
          <GroupLabel $shift={1}><Text w={40}>Add-ins</Text></GroupLabel>
        </Group>
        <Collapse><Ico w={10} h={6}><path d="M.5 5.500L5 1l4.500 4.500" stroke="#444" strokeWidth="1.200" /></Ico></Collapse>
      </Ribbon>
      <Workspace>
        <Sheet>
          {documentLines.map((l, i) => l.gap
            ? <Line key={i} $h={l.gap} />
            : l.t
              ? <Line key={i} $h={l.h}><Text w={l.w} size={13} font={calibri}>{l.t}</Text></Line>
              : <Line key={i} $h={29}><Text w={l.w} size={12.6} font='"DejaVu Sans"' squeeze>{l.a}</Text>{l.caret && <Caret />}</Line>)}
        </Sheet>
        <ScrollBar>
          <ScrollBox $h={15}><Ico w={7} h={4}><path d="M0 4h7L3.500 0z" fill="#222" /></Ico></ScrollBox>
          <ScrollBox $h={17} />
          <ScrollBox $h={15} $mt="auto"><Ico w={7} h={4}><path d="M0 0h7L3.500 4z" fill="#222" /></Ico></ScrollBox>
        </ScrollBar>
      </Workspace>
      <Status>
        <Piece $gap={8} $drop={-1}><Text w={69}>Page 1 of 137</Text></Piece>
        <Piece $gap={19} $drop={-1}><Text w={59}>9335 words</Text></Piece>
        <Piece $gap={19} $w={15} $drop={-2}><Ico w={15} h={13} stroke={G}><path d="M8 2.500L6 1H.5v9.500H6l2 1.500 2-1.500h3M6.500 1.500v10M8 2.500L10 1h1M8.500 8.500L14 2l1 1-5.500 6z" /></Ico></Piece>
        <Piece $gap={17} $drop={-1}><Text w={106}>Arabic (Saudi Arabia)</Text></Piece>
        <Piece $gap={18} $w={16}><Ico w={16} h={15} stroke="#555"><path d="M6 1A6 6 0 004 12" strokeDasharray="2 1" strokeWidth="1.300" /><path d="M7 0v5l3 2M6 8l8 6M7 13.500L15 7M4 6l4 1" strokeWidth="1.400" /></Ico></Piece>
        <Piece $gap={3} $drop={-1}><Text w={126} weight={600}>Accessibility: Investigate</Text></Piece>
        <Piece $gap={604} $w={14} $drop={-2}><BookIcon /></Piece>
        <ViewOn><PageIcon /></ViewOn>
        <Piece $gap={13} $w={15} $drop={-2}><WebIcon /></Piece>
        <Piece $gap={18} $w={8} $drop={-1}><Ico w={8} h={1}><path d="M0 .5h8" stroke="#333" /></Ico></Piece>
        <Slider />
        <Piece $w={8} $drop={-1}><Ico w={9} h={9}><path d="M0 4.500h9M4.500 0v9" stroke="#333" /></Ico></Piece>
        <Piece $gap={13} $drop={-1}><Text w={27}>100%</Text></Piece>
      </Status>
      <SystemTaskbar />
      <Brand>
        <BrandArabic><Text w={164} size={58} weight={700} font='"DejaVu Sans"' squeeze>مستقل</Text></BrandArabic>
        <BrandLatin><Text w={164} size={26} weight={700} font='"Liberation Sans"'>mostaql.com</Text></BrandLatin>
      </Brand>
    </Window>
  );
}
